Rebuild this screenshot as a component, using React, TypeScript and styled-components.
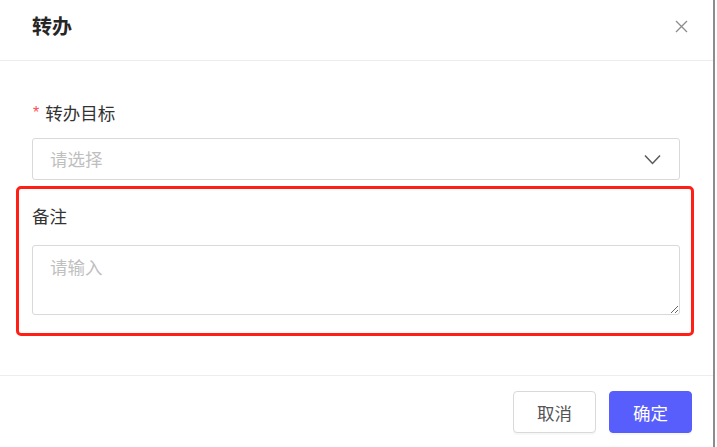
import React from 'react';
import styled, { createGlobalStyle } from 'styled-components';

const GlobalStyle = createGlobalStyle`
  html, body {
    margin: 0;
    padding: 0;
    background: #fff;
  }
  body {
    font-family: "Noto Sans CJK SC", "Noto Sans", sans-serif;
    color: #333;
  }
`;

const Page = styled.div`
  width: 717px;
  height: 447px;
  display: flex;
  background: #fff;
  overflow: hidden;
`;

const Modal = styled.div`
  width: 715px;
  height: 447px;
  border-right: 2px solid #8c8c8c;
  display: flex;
  flex-direction: column;
  box-sizing: border-box;
`;

const Header = styled.div`
  height: 61px;
  box-sizing: border-box;
  border-bottom: 1px solid #ececec;
  display: flex;
  align-items: center;
  justify-content: space-between;
  padding: 0 20px 0 32px;
`;

const Title = styled.div`
  font-size: 20px;
  font-weight: 700;
  color: #262626;
  line-height: 28px;
  margin-top: -8px;
`;

const CloseBtn = styled.button`
  border: none;
  background: none;
  padding: 0;
  width: 24px;
  height: 24px;
  display: flex;
  align-items: center;
  justify-content: center;
  cursor: pointer;
  margin-top: -8px;
`;

const Body = styled.div`
  padding: 40px 33px 39px 32px;
  border-bottom: 1px solid #ececec;
`;

const Label = styled.div`
  font-size: 17.5px;
  line-height: 24px;
  color: #333;
  display: flex;
  align-items: center;
`;

const Required = styled.span`
  color: #ff4d4f;
  font-size: 16px;
  margin-right: 6px;
  margin-left: 1px;
  font-family: "Liberation Sans", sans-serif;
`;

const SelectBox = styled.div`
  margin-top: 13px;
  height: 42px;
  box-sizing: border-box;
  border: 1px solid #d9d9d9;
  border-radius: 3px;
  display: flex;
  align-items: center;
  justify-content: space-between;
  padding: 0 18px 0 17px;
`;

const Placeholder = styled.span`
  font-size: 17.5px;
  color: #bfbfbf;
  line-height: 24px;
`;

const Highlight = styled.div`
  margin: 6px -14px 0 -16px;
  border: 3px solid #ff1f14;
  border-radius: 5px;
  padding: 15px 11px 18px 13px;
`;

const TextArea = styled.textarea`
  display: block;
  margin-top: 17px;
  width: 100%;
  height: 70px;
  box-sizing: border-box;
  border: 1px solid #d9d9d9;
  border-radius: 3px;
  padding: 9px 17px;
  font-family: "Noto Sans CJK SC", "Noto Sans", sans-serif;
  font-size: 17.5px;
  line-height: 24px;
  color: #333;
  outline: none;
  &::placeholder {
    color: #bfbfbf;
  }
`;

const Footer = styled.div`
  display: flex;
  justify-content: flex-end;
  gap: 13px;
  padding: 15px 21px 0 0;
`;

const Button = styled.button<{ $primary?: boolean }>`
  width: 83px;
  height: 42px;
  box-sizing: border-box;
  border-radius: 4px;
  font-family: "Noto Sans CJK SC", "Noto Sans", sans-serif;
  font-size: 17.5px;
  cursor: pointer;
  border: 1px solid ${(p) => (p.$primary ? '#585efc' : '#d9d9d9')};
  background: ${(p) => (p.$primary ? '#585efc' : '#fff')};
  color: ${(p) => (p.$primary ? '#fff' : '#555')};
  box-shadow: 0 2px 0 rgba(0, 0, 0, 0.03);
`;

const App = () => {
  return (
    <Page>
      <GlobalStyle />
      <Modal>
        <Header>
          <Title>转办</Title>
          <CloseBtn aria-label="close">
            <svg width="13" height="13" viewBox="0 0 13 13">
              <path d="M1 1 L12 12 M12 1 L1 12" stroke="#8c8c8c" strokeWidth="1.3" fill="none" />
            </svg>
          </CloseBtn>
        </Header>
        <Body>
          <Label>
            <Required>*</Required>转办目标
          </Label>
          <SelectBox>
            <Placeholder>请选择</Placeholder>
            <svg width="17" height="11" viewBox="0 0 17 11">
              <path d="M1 1.5 L8.5 9.5 L16 1.5" stroke="#595959" strokeWidth="1.5" fill="none" />
            </svg>
          </SelectBox>
          <Highlight>
            <Label>备注</Label>
            <TextArea placeholder="请输入" />
          </Highlight>
        </Body>
        <Footer>
          <Button>取消</Button>
          <Button $primary>确定</Button>
        </Footer>
      </Modal>
    </Page>
  );
};

export default App;
